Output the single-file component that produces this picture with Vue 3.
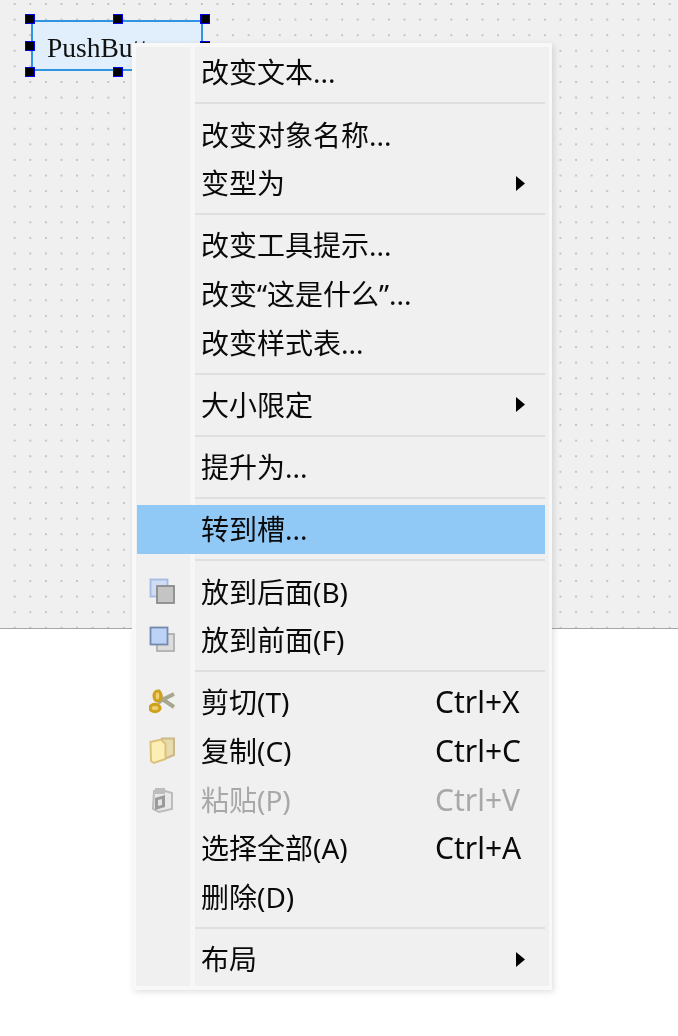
<template>
  <div class="page">
    <div class="canvas">
      <div class="widget">PushButton</div>
      <span v-for="h in handles" :key="h.id" class="handle" :style="{ left: h.x + 'px', top: h.y + 'px' }"></span>
    </div>

    <div class="menu">
      <template v-for="(item, i) in items" :key="i">
        <div v-if="item.sep" class="sep"></div>
        <div v-else class="row" :class="{ active: item.active, disabled: item.disabled }">
          <div class="icon">
            <svg v-if="item.icon === 'back'" width="28" height="28" viewBox="0 0 28 28">
              <rect x="1.5" y="1.5" width="17" height="17" fill="#cfdcf4" stroke="#a3bbe0" stroke-width="1.8" />
              <rect x="8" y="8" width="17" height="17" fill="#c4c4c4" stroke="#8c8c8c" stroke-width="1.8" />
            </svg>
            <svg v-if="item.icon === 'front'" width="28" height="28" viewBox="0 0 28 28">
              <rect x="8" y="8" width="17" height="17" fill="#dcdcdc" stroke="#b0b0b0" stroke-width="1.8" />
              <rect x="1.5" y="1.5" width="17" height="17" fill="#bcd2f6" stroke="#7489ad" stroke-width="1.8" />
            </svg>
            <svg v-if="item.icon === 'cut'" width="28" height="28" viewBox="0 0 28 28">
              <path d="M9 2 L13 11 L25 19" fill="none" stroke="#a8a78e" stroke-width="4" />
              <path d="M25 6 L13 12 L9 15" fill="none" stroke="#a8a78e" stroke-width="4" />
              <ellipse cx="8.5" cy="8" rx="3.4" ry="5" fill="#f0d070" stroke="#cfa21e" stroke-width="3.2" />
              <ellipse cx="6" cy="20" rx="5" ry="3.6" fill="#f0d070" stroke="#cfa21e" stroke-width="3.2" />
            </svg>
            <svg v-if="item.icon === 'copy'" width="28" height="28" viewBox="0 0 28 28">
              <path d="M13 1.5 H25 V18 L15 22 Z" fill="#e6dcae" stroke="#ccb88a" stroke-width="2" />
              <path d="M1.5 5 L12 2.5 L16.5 7 V22 L5 26 L2 24 Z" fill="#fdefb4" stroke="#dcc27a" stroke-width="2" />
            </svg>
            <svg v-if="item.icon === 'paste'" width="28" height="28" viewBox="0 0 28 28">
              <path d="M5 5 H16 L23 7 V23 L10 26 L4 23 Z" fill="#e8e8e8" stroke="#bcbcbc" stroke-width="2" />
              <path d="M6 2 H16 V8 H6 Z" fill="#bdbdbd" />
              <path d="M6 12 L16 9 V21 L6 24 Z" fill="#9a9a9a" />
              <path d="M9 14 L13 13 V19 L9 20 Z" fill="#e4e4e4" />
            </svg>
          </div>
          <div class="label">{{ item.text }}</div>
          <div class="shortcut">{{ item.key }}</div>
          <svg v-if="item.more" class="arrow" width="9" height="15" viewBox="0 0 9 15">
            <polygon points="0,0 9,7.5 0,15" fill="#000" />
          </svg>
        </div>
      </template>
    </div>
  </div>
</template>

<script setup>
const handles = [
  { id: 'tl', x: 25, y: 14 },
  { id: 'tc', x: 113, y: 14 },
  { id: 'tr', x: 200, y: 14 },
  { id: 'ml', x: 25, y: 41 },
  { id: 'mr', x: 200, y: 41 },
  { id: 'bl', x: 25, y: 67 },
  { id: 'bc', x: 113, y: 67 },
  { id: 'br', x: 200, y: 67 }
]

const items = [
  { text: '改变文本...' },
  { sep: true },
  { text: '改变对象名称...' },
  { text: '变型为', more: true },
  { sep: true },
  { text: '改变工具提示...' },
  { text: '改变“这是什么”...' },
  { text: '改变样式表...' },
  { sep: true },
  { text: '大小限定', more: true },
  { sep: true },
  { text: '提升为...' },
  { sep: true },
  { text: '转到槽...', active: true },
  { sep: true },
  { text: '放到后面(B)', icon: 'back' },
  { text: '放到前面(F)', icon: 'front' },
  { sep: true },
  { text: '剪切(T)', icon: 'cut', key: 'Ctrl+X' },
  { text: '复制(C)', icon: 'copy', key: 'Ctrl+C' },
  { text: '粘贴(P)', icon: 'paste', key: 'Ctrl+V', disabled: true },
  { text: '选择全部(A)', key: 'Ctrl+A' },
  { text: '删除(D)' },
  { sep: true },
  { text: '布局', more: true }
]
</script>

<style>
body {
  background: #fff;
}
</style>

<style scoped>
.page {
  position: relative;
  width: 678px;
  height: 1036px;
  overflow: hidden;
  background: #fff;
  font-family: "Noto Sans", "Noto Sans CJK SC", sans-serif;
  filter: blur(0.45px);
}

.canvas {
  position: relative;
  height: 628px;
  border-bottom: 1px solid #a6a6a6;
  background-color: #f0f0f0;
  background-image: radial-gradient(circle at center, #c4c4c4 0, #c4c4c4 1px, transparent 1.5px);
  background-size: 15.6px 15.6px;
  background-position: 6.9px -3.8px;
}

.widget {
  position: absolute;
  left: 31px;
  top: 20px;
  width: 172px;
  height: 51px;
  box-sizing: border-box;
  padding-left: 14px;
  border: 2px solid #2f95e3;
  background: #e1eefb;
  color: #111;
  font-family: "Liberation Serif", serif;
  font-size: 27.5px;
  line-height: 51px;
  white-space: nowrap;
  overflow: hidden;
}

.handle {
  position: absolute;
  width: 10px;
  height: 10px;
  box-sizing: border-box;
  background: #000;
  border: 1.5px solid #0000f0;
}

.menu {
  position: absolute;
  left: 132px;
  top: 43px;
  width: 420px;
  height: 947px;
  box-sizing: border-box;
  padding: 1px 4px 2px 1px;
  border: solid #f8f8f8;
  border-width: 4px 3px 4px 4px;
  background: #f0f0f0;
  box-shadow: 2px 2px 6px rgba(0, 0, 0, 0.12);
}

.menu::before {
  content: "";
  position: absolute;
  left: 54px;
  top: 0;
  bottom: 0;
  width: 5px;
  background: #f6f6f6;
}

.sep {
  position: relative;
  height: 13.5px;
  margin-left: 58px;
  display: flex;
  align-items: center;
}

.sep::after {
  content: "";
  flex: 1;
  height: 2px;
  background: #dfdfdf;
}

.row {
  position: relative;
  display: grid;
  grid-template-columns: 64px 234px 80px 1fr;
  align-items: center;
  height: 48.7px;
  padding-right: 20px;
  color: #0a0a0a;
  font-size: 28px;
  line-height: 48px;
  white-space: nowrap;
}

.row.active {
  background: #90c8f6;
}

.row.disabled {
  color: #a8a8a8;
}

.icon {
  display: flex;
  align-items: center;
  height: 100%;
  padding-left: 12px;
}

.shortcut {
  font-size: 30px;
}

.arrow {
  justify-self: end;
  grid-column: 4;
}
</style>
